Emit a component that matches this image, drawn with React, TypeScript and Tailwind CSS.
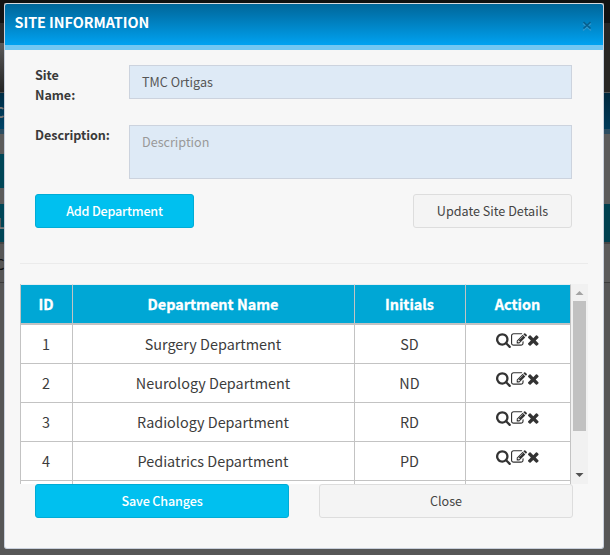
import React from "react";

const SEARCH =
  "M1216 832q0-185-131.5-316.5t-316.5-131.5-316.5 131.5-131.5 316.5 131.5 316.5 316.5 131.5 316.5-131.5 131.5-316.5zm512 832q0 52-38 90t-90 38q-54 0-90-38l-343-342q-179 124-399 124-143 0-273.5-55.5t-225-150-150-225-55.5-273.5 55.5-273.5 150-225 225-150 273.5-55.5 273.5 55.5 225 150 150 225 55.5 273.5q0 220-124 399l343 343q37 37 37 90z";
const EDIT =
  "M888 1184l116-116-152-152-116 116v56h96v96h56zm440-720q-16-16-33 1l-350 350q-17 17-1 33t33-1l350-350q17-17 1-33zm80 594v190q0 119-84.5 203.5t-203.5 84.5h-832q-119 0-203.5-84.5t-84.5-203.5v-832q0-119 84.5-203.5t203.5-84.5h832q63 0 117 25 15 7 18 23 3 17-9 29l-49 49q-14 14-32 8-23-6-45-6h-832q-66 0-113 47t-47 113v832q0 66 47 113t113 47h832q66 0 113-47t47-113v-126q0-13 9-22l64-64q15-15 35-7t20 29zm-96-738l288 288-672 672h-288v-288zm444 132l-92 92-288-288 92-92q28-28 68-28t68 28l152 152q28 28 28 68t-28 68z";
const TIMES =
  "M1490 1322q0 40-28 68l-136 136q-28 28-68 28t-68-28l-294-294-294 294q-28 28-68 28t-68-28l-136-136q-28-28-28-68t28-68l294-294-294-294q-28-28-28-68t28-68l136-136q28-28 68-28t68 28l294 294 294-294q28-28 68-28t68 28l136 136q28 28 28 68t-28 68l-294 294 294 294q28 28 28 68z";

const rows = [
  { id: 1, name: "Surgery Department", initials: "SD" },
  { id: 2, name: "Neurology Department", initials: "ND" },
  { id: 3, name: "Radiology Department", initials: "RD" },
  { id: 4, name: "Pediatrics Department", initials: "PD" },
];

const grid =
  "grid grid-cols-[52px_282px_111px_105px] border-l border-[#c3c3c3] text-center";

function Actions() {
  return (
    <div className="flex justify-center pt-[7px] text-[#333]">
      <svg viewBox="64 0 1664 1792" className="h-4 w-[14.86px]" fill="currentColor">
        <path d={SEARCH} />
      </svg>
      <svg viewBox="0 0 1792 1792" className="size-4" fill="currentColor">
        <path d={EDIT} />
      </svg>
      <svg viewBox="192 0 1408 1792" className="h-4 w-[12.57px]" fill="currentColor">
        <path d={TIMES} />
      </svg>
    </div>
  );
}

/* Dimmed page that stays visible on both sides of the dialog. */
function LeftEdge() {
  return (
    <div className="flex h-full w-1 flex-col overflow-hidden bg-[#565656]">
      <div className="h-[23px] shrink-0 bg-[#131313]" />
      <div className="h-5 shrink-0 bg-[#2b2a2a]" />
      <div className="h-[49px] shrink-0 bg-linear-to-b from-[#5b5b5b] to-[#242424]" />
      <div className="h-px shrink-0 bg-[#4a4a4a]" />
      <div className="h-9 shrink-0 bg-linear-to-b from-[#002d44] to-[#004468]">
        <div className="-ml-[5px] pt-[9px] text-[14px] leading-[20px] font-bold text-[#777]">C</div>
      </div>
      <div className="h-[5px] shrink-0 bg-[#2c4d61]" />
      <div className="h-5 shrink-0 bg-[#5b5b5b]" />
      <div className="h-[34px] shrink-0 bg-[#004657]" />
      <div className="h-4 shrink-0 bg-[#5b5b5b]" />
      <div className="h-[38px] shrink-0 bg-[#004657]">
        <div className="-ml-[3px] pt-[9px] text-[14px] leading-[20px] font-bold text-[#777]">L</div>
      </div>
      <div className="h-[2px] shrink-0 bg-[#454545]" />
      <div className="h-[38px] shrink-0">
        <div className="-ml-[5px] pt-[10px] text-[15px] leading-[20px] text-[#111]">C</div>
      </div>
      <div className="h-px shrink-0 bg-[#3c3c3c]" />
    </div>
  );
}

function RightEdge() {
  return (
    <div className="flex h-full w-1.5 flex-col bg-[#565656]">
      <div className="h-[23px] bg-[#121212]" />
      <div className="h-[69px] bg-[#272625]" />
      <div className="h-px bg-[#555]" />
      <div className="h-9 bg-linear-to-b from-[#00283d] to-[#003a59]" />
      <div className="h-[5px] bg-[#2c4d61]" />
      <div className="h-[70px] bg-[#5b5b5b]" />
      <div className="h-[38px] bg-[#00404f]" />
      <div className="h-[2px] bg-[#454545]" />
      <div className="h-[38px] bg-[#5b5b5b]" />
      <div className="h-px bg-[#3c3c3c]" />
    </div>
  );
}

export default function App() {
  return (
    <div className="flex h-[555px] w-[610px] flex-col overflow-hidden bg-[#565656] font-['Noto_Sans_CJK_SC','Noto_Sans',sans-serif] text-[12.6px] leading-5 text-[#555]">
      <div className="-mb-[3px] h-[3px] shrink-0 bg-[#111]" />
      <div className="flex h-[555px] bg-linear-to-b from-[#111] from-[3px] to-[#565656] to-[3px]">
        <LeftEdge />
        <div className="mt-[3px] flex h-[546px] w-[600px] flex-col overflow-hidden rounded-[3px] border border-[#c9d0dc] border-t-[#d5dbe0] bg-[#f7f7f7]">
          <div className="flex h-[46px] shrink-0 items-start justify-between border-b-[5px] border-[#72c7f2] bg-linear-to-b from-[#006699] to-[#00a2f1] bg-origin-padding pr-[11px] pl-[9.5px]">
            <h1 className="pt-2 text-[14.4px] leading-5 font-bold tracking-[-0.05px] text-white">SITE INFORMATION</h1>
            <svg viewBox="0 0 10 10" className="mt-[17px] size-[10px]" fill="none">
              <path d="M1 2.5L9 9.5M9 2.5L1 9.5" stroke="#2f97cc" strokeWidth="1.5" />
              <path d="M1.5 1L8.5 7.5M8.5 1L1.5 7.5" stroke="#07608f" strokeWidth="1.7" />
            </svg>
          </div>

          <div className="flex flex-col pl-[30px]">
            <div className="mt-[15px] flex h-[34px]">
              <label className="w-[94px] font-bold tracking-[-0.05px] text-[#3a3a3a]">
                Site
                <br />
                Name:
              </label>
              <div className="h-[34px] w-[443px] border border-[#ccd3de] bg-[#deeaf6] px-3 pt-[6px]">TMC Ortigas</div>
            </div>
            <div className="mt-[26px] flex h-[54px]">
              <label className="w-[94px] font-bold tracking-[-0.05px] text-[#3a3a3a]">Description:</label>
              <div className="h-[54px] w-[443px] border border-[#ccd3de] bg-[#deeaf6] px-3 pt-[6px] text-[#999]">
                Description
              </div>
            </div>
            <div className="mt-[15px] flex w-[537px] justify-between">
              <button className="h-[34px] w-[159px] rounded-[3px] border border-[#00acd6] bg-[#00c0ef] pb-px font-medium tracking-[-0.2px] text-white">
                Add Department
              </button>
              <button className="h-[34px] w-[159px] rounded-[3px] border border-[#ddd] bg-[#f4f4f4] pb-px text-[#444]">
                Update Site Details
              </button>
            </div>
          </div>

          <div className="mt-[35px] ml-[15px] h-px w-[568px] shrink-0 bg-[#ebebeb]" />

          <div className="mt-5 ml-[15px] flex h-[200px] w-[568px] shrink-0 overflow-hidden">
            <div className="w-[551px] shrink-0 text-[14.4px] text-[#3c3c3c]">
              <div className={`${grid} h-[41px] text-white`}>
                {["ID", "Department Name", "Initials", "Action"].map((h) => (
                  <div
                    key={h}
                    className="border-t border-r border-b-2 border-[#c3c3c3] border-t-[#e4eef2] bg-[#00a7d5] pt-[9px] pr-px font-bold [-webkit-text-stroke:0.3px_white]"
                  >
                    {h}
                  </div>
                ))}
              </div>
              {rows.map((r) => (
                <div
                  key={r.id}
                  className={`${grid} h-[39px] bg-white *:border-r *:border-b *:border-[#c3c3c3]`}
                >
                  <div className="pt-[9px] pr-px">{r.id}</div>
                  <div className="pt-[9px] pr-px">{r.name}</div>
                  <div className="pt-[9px] pr-px">{r.initials}</div>
                  <div>
                    <Actions />
                  </div>
                </div>
              ))}
              <div className={`${grid} h-[39px] bg-white *:border-r *:border-[#c3c3c3]`}>
                <div />
                <div />
                <div />
                <div />
              </div>
            </div>
            <div className="flex w-[17px] flex-col items-center bg-[#f1f1f1]">
              <svg viewBox="0 0 17 17" className="h-[17px] w-[17px] shrink-0">
                <path d="M4.5 11L8.5 7L12.5 11Z" fill="#a3a3a3" />
              </svg>
              <div className="h-[130px] w-[13px] shrink-0 bg-[#c1c1c1]" />
              <svg viewBox="0 0 17 17" className="mt-auto h-[17px] w-[17px] shrink-0">
                <path d="M4.5 6L8.5 10L12.5 6Z" fill="#505050" />
              </svg>
            </div>
          </div>

          <div className="flex gap-[30px] pl-[30px]">
            <button className="h-[34px] w-[254px] rounded-[3px] border border-[#00acd6] bg-[#00c0ef] pb-px font-medium tracking-[-0.15px] text-white">
              Save Changes
            </button>
            <button className="h-[34px] w-[254px] rounded-[3px] border border-[#ddd] bg-[#f4f4f4] pb-px text-[#444]">
              Close
            </button>
          </div>
        </div>
        <RightEdge />
      </div>
    </div>
  );
}
